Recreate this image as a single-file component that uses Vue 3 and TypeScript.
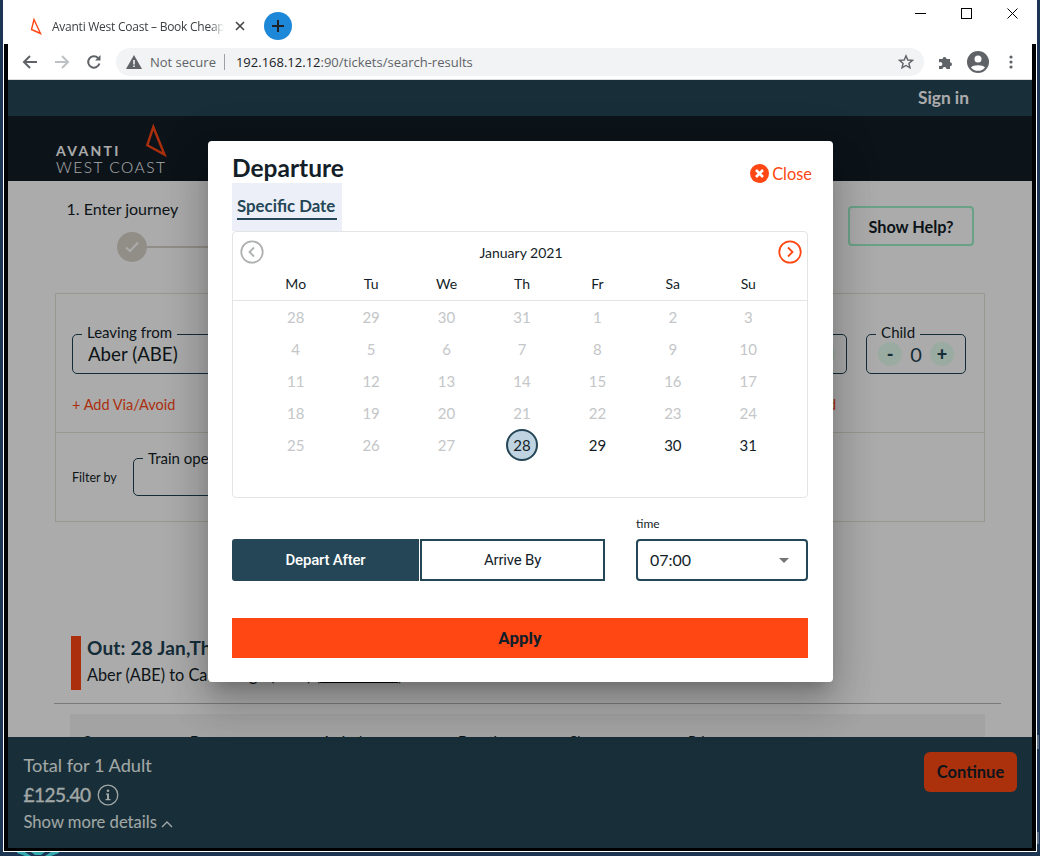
<script setup lang="ts">
const weekdays = ['Mo', 'Tu', 'We', 'Th', 'Fr', 'Sa', 'Su']

const days = [
  28, 29, 30, 31, 1, 2, 3,
  4, 5, 6, 7, 8, 9, 10,
  11, 12, 13, 14, 15, 16, 17,
  18, 19, 20, 21, 22, 23, 24,
  25, 26, 27, 28, 29, 30, 31,
].map((day, i) => ({ key: i, day, selected: i === 31, open: i > 31 }))

const columns = ['Operator', 'Departure', 'Arrival', 'Duration', 'Changes', 'Price']
</script>

<template>
  <div class="desktop">
    <svg class="desktop-icon" width="42" height="4" viewBox="0 0 42 4">
      <path d="M0 0H8L14 4H8L0 1ZM42 0H34L28 4H34L42 1ZM14 0H28L24 3H18Z" fill="#35a9ad" />
    </svg>
    <span class="desktop-mark mark-a"></span>
    <span class="desktop-mark mark-b"></span>

    <div class="window">
      <div class="tabstrip">
        <svg class="favicon" width="12" height="17" viewBox="0 0 12 17">
          <path d="M4 1.500 10.500 15.500 1.500 11.500Z" fill="none" stroke="#ff4713" stroke-width="1.400" />
        </svg>
        <span class="tab-title">Avanti West Coast – Book Cheap</span>
        <svg class="tab-x" width="10" height="10" viewBox="0 0 10 10">
          <path d="M1 1 9 9M9 1 1 9" stroke="#444" stroke-width="1.600" />
        </svg>
        <span class="new-tab">
          <svg width="14" height="14" viewBox="0 0 14 14">
            <path d="M7 1V13M1 7H13" stroke="#202124" stroke-width="2" />
          </svg>
        </span>
        <div class="window-controls">
          <svg width="11" height="11" viewBox="0 0 11 11"><path d="M0 5.500H11" stroke="#000" /></svg>
          <svg width="11" height="11" viewBox="0 0 11 11"><rect x=".5" y=".5" width="10" height="10" fill="none" stroke="#000" /></svg>
          <svg width="11" height="11" viewBox="0 0 11 11"><path d="M.5.5 10.500 10.500M10.500.5.5 10.500" stroke="#000" /></svg>
        </div>
      </div>

      <div class="frame">
        <div class="toolbar">
          <svg width="16" height="16" viewBox="0 0 16 16">
            <path d="M15 8H2M8 2 2 8 8 14" fill="none" stroke="#5f6368" stroke-width="2" />
          </svg>
          <svg width="16" height="16" viewBox="0 0 16 16">
            <path d="M1 8H14M8 2 14 8 8 14" fill="none" stroke="#bdc1c6" stroke-width="2" />
          </svg>
          <svg width="16" height="16" viewBox="0 0 16 16">
            <path d="M13.400 9.500A5.700 5.700 0 1 1 12 4" fill="none" stroke="#5f6368" stroke-width="2" />
            <path d="M14.500 1V6.500H9Z" fill="#5f6368" />
          </svg>
          <div class="omnibox">
            <svg width="16" height="14" viewBox="0 0 16 14">
              <path d="M8 0 16 14H0Z" fill="#5f6368" />
              <path d="M7.200 5H8.800V9.500H7.200ZM7.200 10.500H8.800V12H7.200Z" fill="#f1f3f4" />
            </svg>
            <span class="not-secure">Not secure</span>
            <span class="omni-sep"></span>
            <span class="url">192.168.12.12<em>:90/tickets/search-results</em></span>
            <svg class="star" width="16" height="16" viewBox="0 0 16 16">
              <path d="M8 1.800 9.800 6 14.400 6.400 10.900 9.400 12 13.900 8 11.500 4 13.900 5.100 9.400 1.600 6.400 6.200 6Z" fill="none" stroke="#5f6368" stroke-width="1.400" />
            </svg>
          </div>
          <svg class="puzzle" width="16" height="16" viewBox="0 0 16 16">
            <path d="M1 5H4.500A2 2 0 1 1 8.500 5H12V8.200A2 2 0 1 1 12 12.200V15H8.500A2 2 0 1 0 4.500 15H1V11.500A2 2 0 1 0 1 8.500Z" fill="#5f6368" />
          </svg>
          <svg class="avatar" width="22" height="22" viewBox="0 0 22 22">
            <circle cx="11" cy="11" r="11" fill="#5f6368" />
            <circle cx="11" cy="8" r="3.500" fill="#fff" />
            <path d="M4 16.500C6 13.500 16 13.500 18 16.500A9 9 0 0 1 4 16.500Z" fill="#fff" />
          </svg>
          <svg class="dots" width="4" height="14" viewBox="0 0 4 14">
            <circle cx="2" cy="2" r="1.600" fill="#5f6368" />
            <circle cx="2" cy="7" r="1.600" fill="#5f6368" />
            <circle cx="2" cy="12" r="1.600" fill="#5f6368" />
          </svg>
        </div>

        <div class="page">
          <div class="topbar"><span>Sign in</span></div>
          <header class="site-header">
            <div class="logo">
              <div class="logo-text">
                <strong>AVANTI</strong>
                <span>WEST COAST</span>
              </div>
              <svg class="logo-mark" width="24" height="36" viewBox="0 0 24 36">
                <path d="M10.300 4 21.500 31.500 4.300 22.200Z" fill="none" stroke="#ff4713" stroke-width="2.400" />
              </svg>
            </div>
          </header>

          <main class="content">
            <div class="steps">
              <div class="step">
                <span>1. Enter journey</span>
                <div class="step-track">
                  <span class="step-dot">
                    <svg width="14" height="12" viewBox="0 0 14 12">
                      <path d="M1 6.500 5 10 13 1.500" fill="none" stroke="#fff" stroke-width="2" />
                    </svg>
                  </span>
                  <span class="step-line"></span>
                </div>
              </div>
              <button class="help">Show Help?</button>
            </div>

            <section class="search">
              <div class="search-main">
                <div class="fields">
                  <div class="field leaving"><label>Leaving from</label><span>Aber (ABE)</span></div>
                  <div class="field going"><label>Going to</label><span>Cambridge (CBG)</span></div>
                  <div class="field counter">
                    <label>Adult</label>
                    <button>-</button><span>1</span><button>+</button>
                  </div>
                  <div class="field counter">
                    <label>Child</label>
                    <button>-</button><span>0</span><button>+</button>
                  </div>
                </div>
                <div class="links">
                  <a>+ Add Via/Avoid</a>
                  <a>+ Add Railcard</a>
                </div>
              </div>
              <div class="filters">
                <span class="filter-label">Filter by</span>
                <div class="field operator"><label>Train operator</label></div>
              </div>
            </section>

            <section class="out">
              <span class="out-bar"></span>
              <div>
                <h2>Out: 28 Jan,Thu</h2>
                <p>Aber (ABE) to Cambridge (CBG) (<u>Edit details</u>)</p>
              </div>
            </section>
            <hr class="rule" />
            <div class="table-head">
              <span v-for="col in columns" :key="col">{{ col }}</span>
            </div>
          </main>

          <footer class="basket">
            <div class="basket-info">
              <span class="basket-label">Total for 1 Adult</span>
              <div class="basket-price">
                £125.40
                <svg width="22" height="22" viewBox="0 0 22 22">
                  <circle cx="11" cy="11" r="9.800" fill="none" stroke="currentColor" stroke-width="1.300" />
                  <circle cx="11" cy="6.800" r="1.300" fill="currentColor" />
                  <path d="M9 9.500H12V15H13.500V16.300H8.500V15H10V10.800H9Z" fill="currentColor" />
                </svg>
              </div>
              <span class="basket-more">
                Show more details
                <svg width="12" height="8" viewBox="0 0 12 8">
                  <path d="M1 7 6 2 11 7" fill="none" stroke="currentColor" stroke-width="1.400" />
                </svg>
              </span>
            </div>
            <button class="continue">Continue</button>
          </footer>

          <div class="backdrop">
            <div class="modal">
              <div class="modal-head">
                <h1>Departure</h1>
                <a class="close">
                  <svg width="19" height="19" viewBox="0 0 19 19">
                    <circle cx="9.500" cy="9.500" r="9.500" fill="#ff4713" />
                    <path d="M6 6 13 13M13 6 6 13" stroke="#fff" stroke-width="2.600" />
                  </svg>
                  Close
                </a>
              </div>
              <div class="tab"><span>Specific Date</span></div>

              <div class="calendar">
                <div class="cal-head">
                  <svg width="24" height="24" viewBox="0 0 24 24">
                    <circle cx="12" cy="12" r="10.700" fill="none" stroke="#aeb0b2" stroke-width="1.800" />
                    <path d="M14 7.500 9.500 12 14 16.500" fill="none" stroke="#aeb0b2" stroke-width="1.800" />
                  </svg>
                  <span>January 2021</span>
                  <svg width="24" height="24" viewBox="0 0 24 24">
                    <circle cx="12" cy="12" r="10.700" fill="none" stroke="#ff4713" stroke-width="1.800" />
                    <path d="M10 7.500 14.500 12 10 16.500" fill="none" stroke="#ff4713" stroke-width="1.800" />
                  </svg>
                </div>
                <div class="weekdays">
                  <span v-for="name in weekdays" :key="name">{{ name }}</span>
                </div>
                <div class="days">
                  <span
                    v-for="cell in days"
                    :key="cell.key"
                    class="day"
                    :class="{ selected: cell.selected, open: cell.open }"
                  ><i>{{ cell.day }}</i></span>
                </div>
              </div>

              <div class="when">
                <div class="toggle">
                  <button class="on">Depart After</button>
                  <button>Arrive By</button>
                </div>
                <div class="time">
                  <label>time</label>
                  <div class="select">07:00<span class="caret"></span></div>
                </div>
              </div>

              <button class="apply">Apply</button>
            </div>
          </div>
        </div>
      </div>
    </div>
  </div>
</template>

<style>
body {
  margin: 0;
}
</style>

<style scoped>
.desktop {
  position: relative;
  width: 1040px;
  height: 856px;
  overflow: hidden;
  background: #1b3553;
  font-family: Lato, 'Noto Sans', sans-serif;
  color: #131e28;
}
.desktop-icon {
  position: absolute;
  left: 17px;
  top: 852px;
}
.desktop-mark {
  position: absolute;
  left: 1037px;
  width: 2px;
  background: #5d7088;
}
.mark-a {
  top: 735px;
  height: 14px;
}
.mark-b {
  top: 832px;
  height: 12px;
}
.window {
  width: 1034px;
  height: 852px;
  margin-left: 3px;
  box-sizing: border-box;
  padding: 0 1px 1px;
  background: #fff;
  display: flex;
  flex-direction: column;
}
.tabstrip {
  height: 44px;
  flex: none;
  box-sizing: border-box;
  display: flex;
  align-items: center;
  padding: 8px 0 0 26px;
}
.tab-title {
  width: 172px;
  margin-left: 10px;
  font: 12px 'Open Sans', sans-serif;
  letter-spacing: -0.25px;
  color: #3c4043;
  white-space: nowrap;
  overflow: hidden;
  -webkit-mask-image: linear-gradient(to right, #000 92%, transparent);
  mask-image: linear-gradient(to right, #000 92%, transparent);
}
.tab-x {
  margin-left: 11px;
}
.new-tab {
  width: 28px;
  height: 28px;
  margin-left: 19px;
  border-radius: 50%;
  background: #1e88d8;
  display: grid;
  place-items: center;
}
.window-controls {
  margin-left: auto;
  margin-top: -26px;
  margin-right: 18px;
  display: flex;
  gap: 35px;
}
.frame {
  flex: 1;
  min-height: 0;
  display: flex;
  flex-direction: column;
  border: solid #000;
  border-width: 0 4px 3px;
}
.toolbar {
  height: 36px;
  flex: none;
  box-sizing: border-box;
  border-bottom: 1px solid #dadce0;
  display: flex;
  align-items: center;
  gap: 16px;
  padding-left: 14px;
}
.omnibox {
  width: 808px;
  height: 28px;
  margin-left: -2px;
  margin-right: -2px;
  padding: 0 10px;
  box-sizing: border-box;
  border-radius: 14px;
  background: #f1f3f4;
  display: flex;
  align-items: center;
  font: 13px 'Open Sans', sans-serif;
}
.not-secure {
  margin-left: 8px;
  color: #5f6368;
}
.omni-sep {
  width: 1px;
  height: 16px;
  margin: 0 11px 0 8px;
  background: #9aa0a6;
}
.url {
  color: #202124;
}
.url em {
  font-style: normal;
  color: #5f6368;
}
.star {
  margin-left: auto;
}
.avatar {
  margin-left: -3px;
}
.dots {
  margin-left: 4px;
}
.page {
  position: relative;
  flex: 1;
  min-height: 0;
  overflow: hidden;
  background: #fff;
  display: flex;
  flex-direction: column;
}
.topbar {
  height: 36px;
  flex: none;
  box-sizing: border-box;
  background: #244656;
  color: #fff;
  font-weight: 700;
  font-size: 17.300px;
  display: flex;
  align-items: center;
  justify-content: flex-end;
  padding: 0 63px 2px 0;
}
.site-header {
  height: 65px;
  flex: none;
  background: #131e28;
  padding-left: 48px;
  box-sizing: border-box;
}
.logo {
  position: relative;
  width: 112px;
  height: 65px;
}
.logo-text {
  position: absolute;
  left: 0;
  top: 27px;
  color: #fff;
  line-height: 16px;
  white-space: nowrap;
}
.logo-text strong {
  display: block;
  font-size: 14px;
  letter-spacing: 2.300px;
}
.logo-text span {
  display: block;
  font-size: 15.500px;
  font-weight: 300;
  letter-spacing: 1.500px;
}
.logo-mark {
  position: absolute;
  left: 87px;
  top: 7px;
}
.content {
  flex: 1;
  min-height: 0;
  overflow: hidden;
  padding: 0 47px;
}
.steps {
  height: 112px;
  display: flex;
  justify-content: space-between;
  align-items: flex-start;
}
.step {
  padding: 18px 0 0 11.500px;
  font-size: 16px;
  line-height: 20px;
}
.step-track {
  display: flex;
  align-items: center;
  margin: 13px 0 0 50.500px;
}
.step-dot {
  width: 30px;
  height: 30px;
  border-radius: 50%;
  background: #d9d4ca;
  display: grid;
  place-items: center;
}
.step-line {
  width: 260px;
  height: 2px;
  background: #d9d4ca;
}
.help {
  width: 126px;
  height: 40px;
  margin: 25px 11px 0 0;
  border: 2px solid #9ef2cb;
  border-radius: 4px;
  background: transparent;
  font: 700 16.300px Lato, sans-serif;
  color: #131e28;
}
.search {
  height: 229px;
  box-sizing: border-box;
  border: 1px solid #e6e2d6;
}
.search-main {
  height: 139px;
  box-sizing: border-box;
  padding: 40px 18px 0 16px;
  border-bottom: 1px solid #e6e2d6;
}
.fields {
  display: flex;
  gap: 19px;
}
.field {
  position: relative;
  height: 40px;
  box-sizing: border-box;
  border: 1px solid #1f4456;
  border-radius: 5px;
  display: flex;
  align-items: center;
}
.field label {
  position: absolute;
  left: 9px;
  top: -12px;
  padding: 0 5px;
  background: #fff;
  font-size: 15px;
  line-height: 18px;
}
.leaving,
.going {
  width: 319px;
  padding: 0 15px;
  font-size: 18.700px;
}
.counter {
  width: 100px;
  justify-content: space-between;
  padding: 0 11px;
  font-size: 20px;
  color: #1f4456;
}
.counter label {
  color: #131e28;
}
.counter button {
  width: 24px;
  height: 24px;
  padding: 0;
  border: 0;
  border-radius: 50%;
  background: #e6fff0;
  font: 900 18px Lato, sans-serif;
  color: #1f4456;
}
.links {
  display: flex;
  justify-content: space-between;
  padding-right: 130px;
  margin-top: 21px;
  font-size: 14.500px;
  line-height: 20px;
  color: #ff4713;
}
.filters {
  height: 89px;
  display: flex;
  align-items: center;
  padding: 0 0 0 16px;
}
.filter-label {
  width: 61px;
  font-size: 12.500px;
}
.operator {
  width: 300px;
  height: 38px;
  margin-bottom: 2px;
}
.operator label {
  left: 9px;
  top: -10px;
}
.out {
  margin: 114px 0 0 16px;
  display: flex;
  gap: 6px;
  height: 54px;
}
.out-bar {
  width: 10px;
  background: #ff4713;
}
.out h2 {
  margin: 2px 0 0;
  font-size: 19px;
  letter-spacing: 0.2px;
  line-height: 20px;
  font-weight: 700;
  color: #1f4456;
  white-space: nowrap;
}
.out p {
  margin: 7px 0 0;
  font-size: 16.300px;
  line-height: 20px;
  white-space: nowrap;
}
.out u {
  text-decoration-color: #000;
  text-decoration-thickness: 1px;
  text-decoration-skip-ink: none;
}
.rule {
  width: 947px;
  margin: 13px 0 0 -1px;
  border: 0;
  border-top: 1px solid #b4b8bb;
}
.table-head {
  height: 40px;
  width: 915px;
  margin: 10px 0 0 15px;
  padding: 18px 0 0 12px;
  box-sizing: border-box;
  background: #f4f4f4;
  display: grid;
  grid-template-columns: 108px 132px 136px 110px 120px 1fr;
  font-size: 14px;
  line-height: 18px;
}
.basket {
  position: relative;
  height: 111px;
  flex: none;
  box-sizing: border-box;
  background: #244656;
  color: #f2fbf8;
  padding: 15px 15px 0 15.500px;
  display: flex;
  justify-content: space-between;
  align-items: flex-start;
}
.basket-info {
  display: flex;
  flex-direction: column;
}
.basket-label {
  font-size: 18.200px;
  line-height: 26px;
}
.basket-price {
  display: flex;
  align-items: center;
  gap: 6px;
  margin-top: 2px;
  font-size: 19px;
  letter-spacing: -0.5px;
  line-height: 30px;
  -webkit-text-stroke: 0.3px currentColor;
}
.basket-more {
  margin-top: 0;
  font-size: 16.600px;
  line-height: 24px;
}
.continue {
  width: 93px;
  height: 40px;
  padding: 0;
  border: 0;
  border-radius: 6px;
  background: #ff4a12;
  color: #131e28;
  font: 700 16.500px Lato, sans-serif;
}
.backdrop {
  position: absolute;
  inset: 0;
  background: rgba(0, 0, 0, 0.33);
}
.modal {
  position: absolute;
  left: 200px;
  top: 61px;
  width: 625px;
  height: 541px;
  box-sizing: border-box;
  padding: 0 25px 0 24px;
  border-radius: 4px;
  background: #fff;
  box-shadow: 0 11px 15px -7px rgba(0, 0, 0, 0.2), 0 24px 38px 3px rgba(0, 0, 0, 0.14), 0 9px 46px 8px rgba(0, 0, 0, 0.12);
}
.modal-head {
  height: 42px;
  display: flex;
  justify-content: space-between;
  align-items: flex-end;
}
.modal-head h1 {
  margin: 0;
  font-size: 24.500px;
  line-height: 30px;
  font-weight: 700;
  color: #131e28;
}
.close {
  display: flex;
  align-items: center;
  gap: 3px;
  margin-right: -4px;
  height: 20px;
  font-size: 16.400px;
  color: #ff4713;
}
.tab {
  width: 110px;
  height: 48px;
  box-sizing: border-box;
  padding: 13px 5px 0;
  background: #eceff8;
}
.tab span {
  display: block;
  font-size: 16.800px;
  line-height: 20px;
  font-weight: 700;
  color: #244656;
  border-bottom: 2px solid #244656;
  padding-bottom: 2px;
  white-space: nowrap;
}
.calendar {
  height: 267px;
  box-sizing: border-box;
  border: 1px solid #e3e4e6;
  border-radius: 4px;
}
.cal-head {
  height: 40px;
  padding: 0 5px 0 7px;
  display: flex;
  justify-content: space-between;
  align-items: center;
  font-size: 14px;
}
.weekdays {
  height: 29px;
  box-sizing: border-box;
  padding: 0 21px 5px 25px;
  display: grid;
  grid-template-columns: repeat(7, 1fr);
  border-bottom: 1px solid #e3e4e6;
  font-size: 14px;
  line-height: 24px;
  text-align: center;
}
.days {
  padding: 0 21px 0 25px;
  display: grid;
  grid-template-columns: repeat(7, 1fr);
  grid-auto-rows: 32px;
}
.day {
  display: grid;
  place-items: center;
  font-size: 15px;
  color: #c4c6c8;
}
.day i {
  width: 32px;
  height: 32px;
  display: grid;
  place-items: center;
  font-style: normal;
  box-sizing: border-box;
  border-radius: 50%;
}
.day.open,
.day.selected {
  color: #131e28;
}
.day.selected i {
  background: #bfd3e0;
  border: 2px solid #244656;
}
.when {
  margin-top: 18px;
  display: flex;
  justify-content: space-between;
  align-items: flex-end;
}
.toggle {
  width: 373px;
  display: flex;
  gap: 1px;
}
.toggle button {
  width: 185px;
  height: 42px;
  box-sizing: border-box;
  border: 2px solid #244656;
  background: #fff;
  font: 15px Roboto, sans-serif;
  letter-spacing: -0.2px;
  color: #131e28;
}
.toggle .on {
  width: 187px;
  background: #244656;
  color: #fff;
  font-weight: 500;
  border-radius: 3px 0 0 3px;
}
.time {
  width: 172px;
}
.time label {
  display: block;
  font-size: 12px;
  line-height: 16px;
  margin-bottom: 7px;
}
.select {
  height: 42px;
  box-sizing: border-box;
  padding: 0 17px 1px 12px;
  border: 2px solid #244656;
  border-radius: 4px;
  display: flex;
  align-items: center;
  justify-content: space-between;
  font-size: 16px;
}
.caret {
  border: 5px solid transparent;
  border-top: 5px solid #757575;
  border-bottom: 0;
  margin-top: 2px;
}
.apply {
  display: block;
  width: 100%;
  height: 40px;
  margin-top: 37px;
  border: 0;
  background: #ff4713;
  font: 700 17px Roboto, sans-serif;
  color: #131e28;
}
</style>
